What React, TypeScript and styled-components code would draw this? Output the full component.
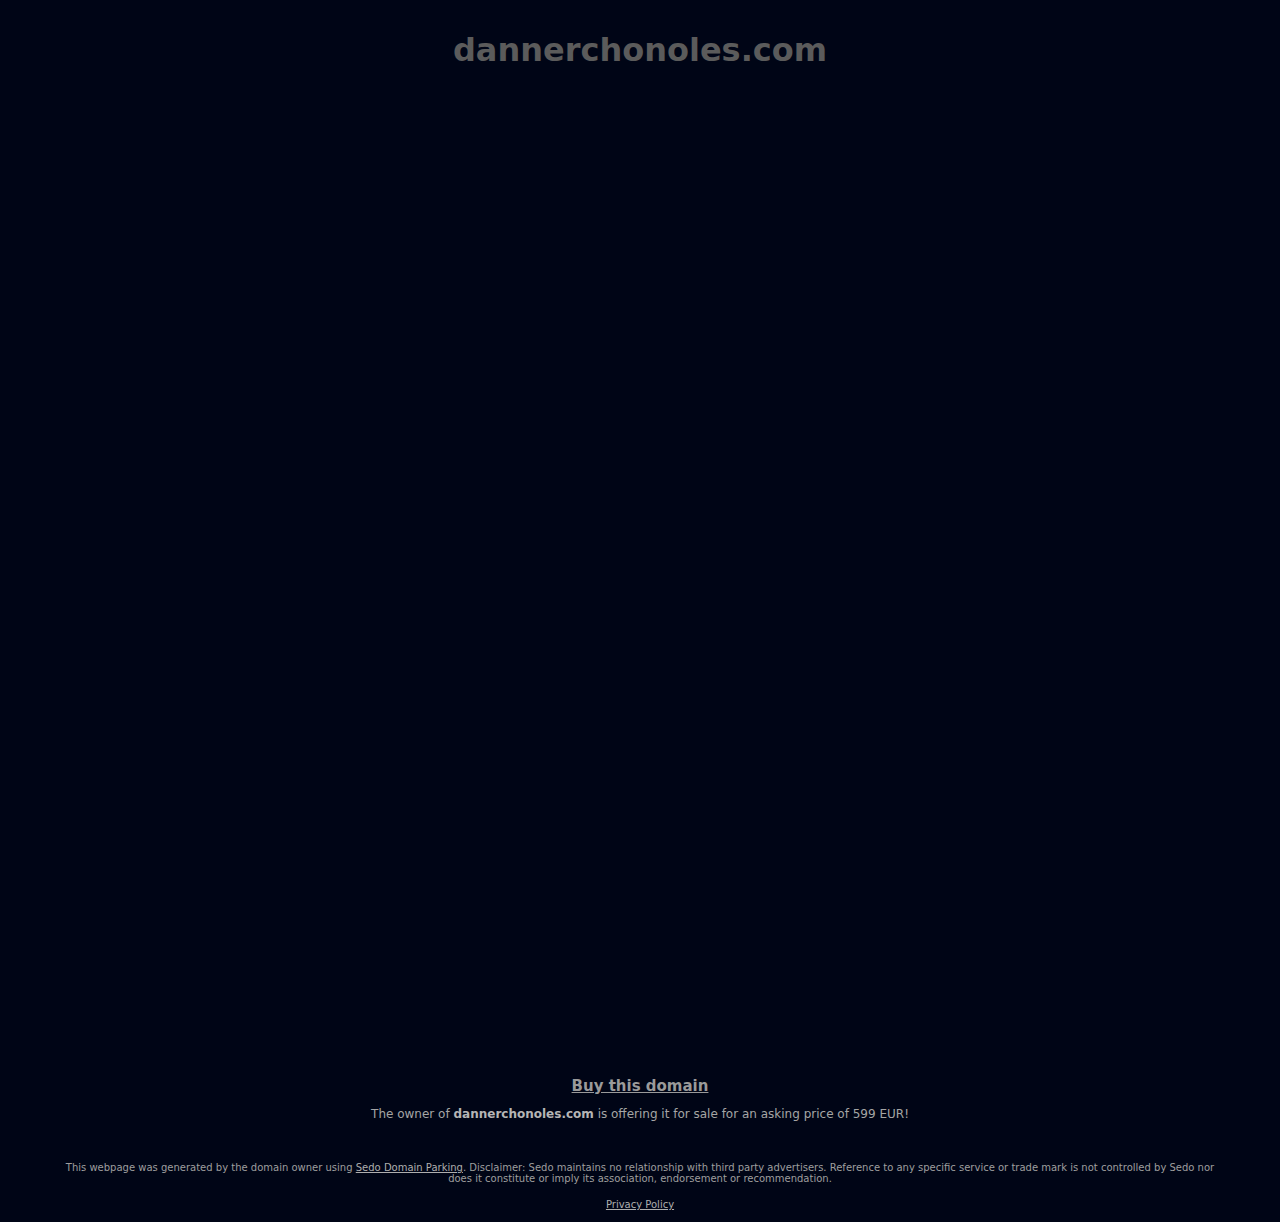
import React from "react";
import styled, { createGlobalStyle } from "styled-components";

const GlobalStyle = createGlobalStyle`
  html, body {
    margin: 0;
    padding: 0;
    background: #000516;
    font-family: "DejaVu Sans", Verdana, sans-serif;
  }
`;

const Page = styled.div`
  display: flex;
  flex-direction: column;
  min-height: 100vh;
  box-sizing: border-box;
`;

const Header = styled.header`
  padding-top: 30px;
  text-align: center;
`;

const DomainTitle = styled.h1`
  margin: 0;
  font-size: 32px;
  line-height: 40px;
  font-weight: bold;
  color: #5b5b5b;
`;

const Spacer = styled.div`
  flex: 1;
`;

const SaleBox = styled.section`
  text-align: center;
  padding-bottom: 40px;
`;

const BuyLink = styled.a`
  display: inline-block;
  font-size: 15px;
  line-height: 20px;
  font-weight: bold;
  color: #9a9a9a;
  text-decoration: underline;
  margin-bottom: 11px;
`;

const SaleText = styled.p`
  margin: 0;
  font-size: 12px;
  line-height: 15px;
  color: #a5a5a5;

  strong {
    color: #b5b5b5;
  }
`;

const Footer = styled.footer`
  text-align: center;
  padding: 0 60px 12px;
  font-size: 10px;
  line-height: 11px;
  color: #9e9e9e;

  a {
    color: #aeaeae;
    text-decoration: underline;
  }
`;

const Disclaimer = styled.p`
  margin: 0 0 15px;
`;

export default function App() {
  return (
    <>
      <GlobalStyle />
      <Page>
        <Header>
          <DomainTitle>dannerchonoles.com</DomainTitle>
        </Header>
        <Spacer />
        <SaleBox>
          <BuyLink href="#">Buy this domain</BuyLink>
          <SaleText>
            The owner of <strong>dannerchonoles.com</strong> is offering it for
            sale for an asking price of 599 EUR!
          </SaleText>
        </SaleBox>
        <Footer>
          <Disclaimer>
            This webpage was generated by the domain owner using{" "}
            <a href="#">Sedo Domain Parking</a>. Disclaimer: Sedo maintains no
            relationship with third party advertisers. Reference to any specific
            service or trade mark is not controlled by Sedo nor does it
            constitute or imply its association, endorsement or recommendation.
          </Disclaimer>
          <a href="#">Privacy Policy</a>
        </Footer>
      </Page>
    </>
  );
}
